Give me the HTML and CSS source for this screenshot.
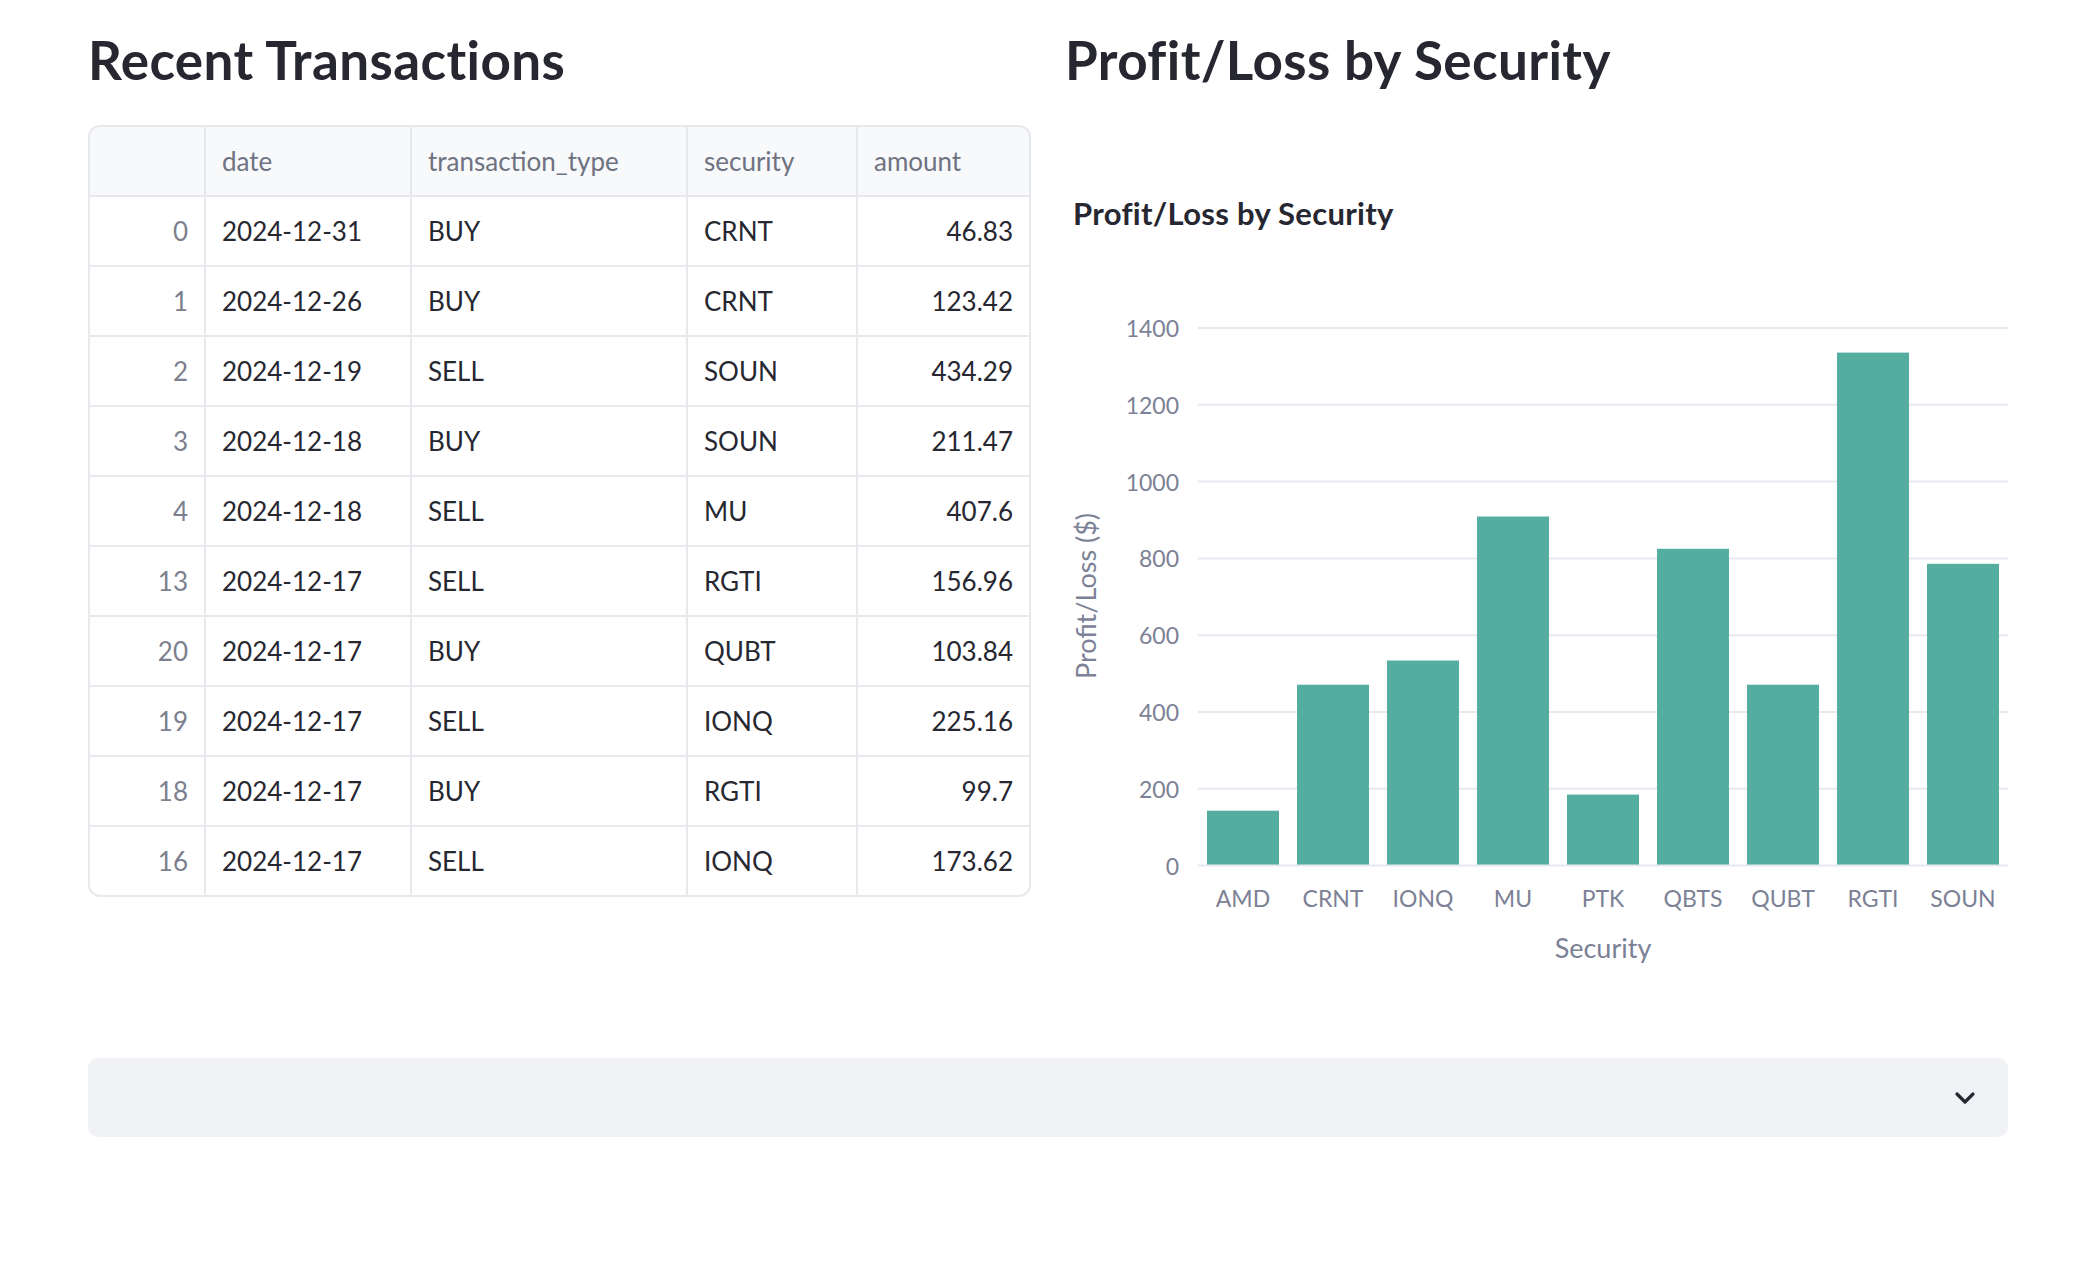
FILE: index.html
```html
<!DOCTYPE html>
<html lang="en">
<head>
<meta charset="utf-8">
<title>Portfolio</title>
<link rel="stylesheet" href="styles.css">
</head>
<body>
<main class="page">
  <div class="columns">
    <section class="col">
      <h3 class="heading">Recent Transactions</h3>
      <div class="tbl">
        <div class="th"></div><div class="th">date</div><div class="th">transaction_type</div><div class="th">security</div><div class="th">amount</div>
        <div class="td idx">0</div><div class="td">2024-12-31</div><div class="td">BUY</div><div class="td">CRNT</div><div class="td num">46.83</div>
        <div class="td idx">1</div><div class="td">2024-12-26</div><div class="td">BUY</div><div class="td">CRNT</div><div class="td num">123.42</div>
        <div class="td idx">2</div><div class="td">2024-12-19</div><div class="td">SELL</div><div class="td">SOUN</div><div class="td num">434.29</div>
        <div class="td idx">3</div><div class="td">2024-12-18</div><div class="td">BUY</div><div class="td">SOUN</div><div class="td num">211.47</div>
        <div class="td idx">4</div><div class="td">2024-12-18</div><div class="td">SELL</div><div class="td">MU</div><div class="td num">407.6</div>
        <div class="td idx">13</div><div class="td">2024-12-17</div><div class="td">SELL</div><div class="td">RGTI</div><div class="td num">156.96</div>
        <div class="td idx">20</div><div class="td">2024-12-17</div><div class="td">BUY</div><div class="td">QUBT</div><div class="td num">103.84</div>
        <div class="td idx">19</div><div class="td">2024-12-17</div><div class="td">SELL</div><div class="td">IONQ</div><div class="td num">225.16</div>
        <div class="td idx">18</div><div class="td">2024-12-17</div><div class="td">BUY</div><div class="td">RGTI</div><div class="td num">99.7</div>
        <div class="td idx">16</div><div class="td">2024-12-17</div><div class="td">SELL</div><div class="td">IONQ</div><div class="td num">173.62</div>
      </div>
    </section>
    <section class="col">
      <h3 class="heading">Profit/Loss by Security</h3>
      <svg class="chart" width="943" height="820" viewBox="0 0 943 820" xmlns="http://www.w3.org/2000/svg">
        <text class="ctitle" x="8" y="65">Profit/Loss by Security</text>
        <g class="grid">
          <line x1="133" x2="943" y1="168" y2="168"/>
          <line x1="133" x2="943" y1="244.8" y2="244.8"/>
          <line x1="133" x2="943" y1="321.6" y2="321.6"/>
          <line x1="133" x2="943" y1="398.4" y2="398.4"/>
          <line x1="133" x2="943" y1="475.2" y2="475.2"/>
          <line x1="133" x2="943" y1="552" y2="552"/>
          <line x1="133" x2="943" y1="628.8" y2="628.8"/>
        </g>
        <g class="ytick">
          <text x="114" y="168">1400</text>
          <text x="114" y="244.8">1200</text>
          <text x="114" y="321.6">1000</text>
          <text x="114" y="398.4">800</text>
          <text x="114" y="475.2">600</text>
          <text x="114" y="552">400</text>
          <text x="114" y="628.8">200</text>
          <text x="114" y="705.6">0</text>
        </g>
        <g class="bars">
          <rect x="142" y="650.7" width="72" height="54.9"/>
          <rect x="232" y="524.7" width="72" height="180.9"/>
          <rect x="322" y="500.5" width="72" height="205.1"/>
          <rect x="412" y="356.5" width="72" height="349.1"/>
          <rect x="502" y="634.6" width="72" height="71"/>
          <rect x="592" y="388.8" width="72" height="316.8"/>
          <rect x="682" y="524.7" width="72" height="180.9"/>
          <rect x="772" y="192.6" width="72" height="513"/>
          <rect x="862" y="403.8" width="72" height="301.8"/>
        </g>
        <line class="zero" x1="133" x2="943" y1="705.6" y2="705.6"/>
        <g class="xtick">
          <text x="178" y="738">AMD</text>
          <text x="268" y="738">CRNT</text>
          <text x="358" y="738">IONQ</text>
          <text x="448" y="738">MU</text>
          <text x="538" y="738">PTK</text>
          <text x="628" y="738">QBTS</text>
          <text x="718" y="738">QUBT</text>
          <text x="808" y="738">RGTI</text>
          <text x="898" y="738">SOUN</text>
        </g>
        <text class="axtitle" x="538" y="787">Security</text>
        <text class="axtitle" transform="translate(20 436) rotate(-90)" x="0" y="0">Profit/Loss ($)</text>
      </svg>
    </section>
  </div>
  <div class="expander">
    <svg class="chev" width="22" height="14" viewBox="0 0 22 14" xmlns="http://www.w3.org/2000/svg"><polyline points="3,3 11,11 19,3"/></svg>
  </div>
</main>
</body>
</html>
```

FILE: styles.css
```css
html, body {
  margin: 0;
  padding: 0;
  background: #ffffff;
}
body {
  font-family: Lato, "Noto Sans", "Liberation Sans", sans-serif;
  color: #262730;
}
.page {
  padding: 28px 84px 0 88px;
}
.columns {
  display: grid;
  grid-template-columns: 943px 943px;
  column-gap: 34px;
  align-items: start;
}
.col {
  display: flex;
  flex-direction: column;
}
.heading {
  margin: 0;
  font-size: 53px;
  line-height: 64px;
  font-weight: 700;
  color: #262730;
  letter-spacing: 0.4px;
}
.tbl {
  margin-top: 33px;
  display: grid;
  grid-template-columns: 114px 204px 274px 168px 1fr;
  grid-auto-rows: 68px;
  gap: 2px;
  background: #e8e9ed;
  border: 2px solid #e8e9ed;
  border-radius: 12px;
  overflow: hidden;
  font-size: 26px;
}
.th, .td {
  display: flex;
  align-items: center;
  padding: 0 16px;
  background: #ffffff;
  white-space: nowrap;
}
.th {
  background: #f8f9fb;
  color: #6f7281;
}
.td {
  color: #262730;
}
.idx {
  justify-content: flex-end;
  color: #7c7f8d;
}
.num {
  justify-content: flex-end;
}
.chart {
  display: block;
  margin-top: 68px;
  font-family: Lato, "Noto Sans", "Liberation Sans", sans-serif;
}
.ctitle {
  font-size: 31px;
  font-weight: 700;
  fill: #262730;
  letter-spacing: 0.3px;
}
.grid line {
  stroke: #e6e9ef;
  stroke-width: 2;
}
.zero {
  stroke: #e6e9ef;
  stroke-width: 2;
}
.bars rect {
  fill: #55ad9f;
}
.ytick text {
  font-size: 23px;
  fill: #7c8196;
  text-anchor: end;
  dominant-baseline: central;
}
.xtick text {
  font-size: 23px;
  fill: #7c8196;
  text-anchor: middle;
  dominant-baseline: central;
}
.axtitle {
  font-size: 27px;
  fill: #7c8196;
  text-anchor: middle;
  dominant-baseline: central;
}
.expander {
  margin-top: 78px;
  height: 79px;
  background: #f0f2f6;
  border-radius: 10px;
  display: flex;
  align-items: center;
  justify-content: flex-end;
  padding-right: 32px;
}
.chev polyline {
  fill: none;
  stroke: #262730;
  stroke-width: 3.2;
  stroke-linecap: round;
  stroke-linejoin: round;
}
```
